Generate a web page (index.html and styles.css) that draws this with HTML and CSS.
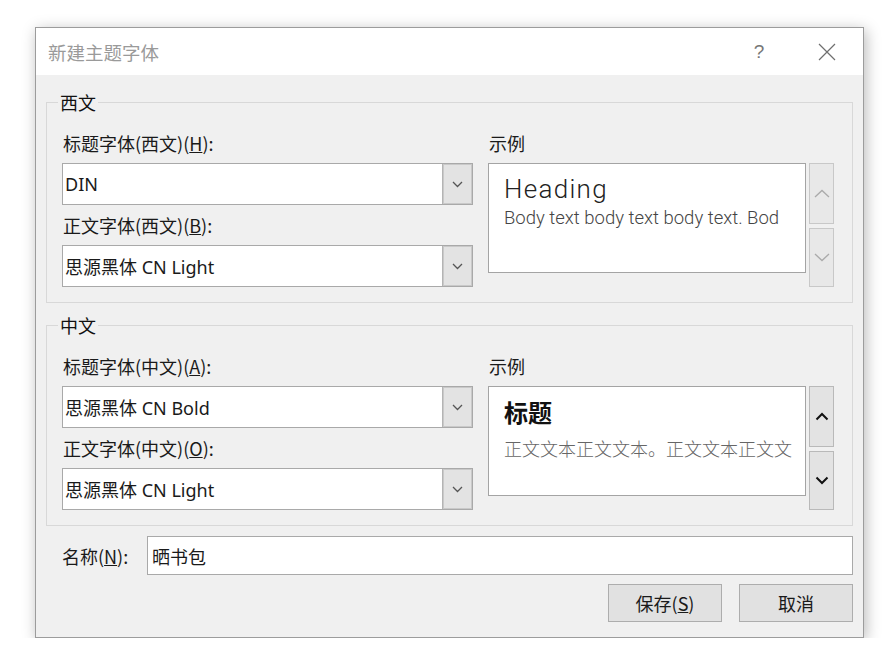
FILE: index.html
```html
<!DOCTYPE html>
<html lang="zh-CN">
<head>
<meta charset="utf-8">
<title>新建主题字体</title>
<link rel="stylesheet" href="styles.css">
</head>
<body>
<div class="dialog">
  <div class="titlebar">
    <div class="title">新建主题字体</div>
    <div class="tb-btn help">?</div>
    <div class="tb-btn close">
      <svg width="18" height="18" viewBox="0 0 18 18"><path d="M1 1 L17 17 M17 1 L1 17" stroke="#6f6f6f" stroke-width="1.2" fill="none"/></svg>
    </div>
  </div>
  <div class="content">
    <fieldset class="group">
      <legend>西文</legend>
      <div class="group-body">
        <div class="col-left">
          <div class="label">标题字体(西文)(<u>H</u>):</div>
          <div class="combo">
            <span class="value">DIN</span>
            <span class="drop"><svg width="11" height="7" viewBox="0 0 11 7"><path d="M1 1 L5.5 5.5 L10 1" stroke="#555" stroke-width="1.3" fill="none"/></svg></span>
          </div>
          <div class="label">正文字体(西文)(<u>B</u>):</div>
          <div class="combo">
            <span class="value">思源黑体 CN Light</span>
            <span class="drop"><svg width="11" height="7" viewBox="0 0 11 7"><path d="M1 1 L5.5 5.5 L10 1" stroke="#555" stroke-width="1.3" fill="none"/></svg></span>
          </div>
        </div>
        <div class="col-right">
          <div class="label">示例</div>
          <div class="preview-row">
            <div class="preview">
              <div class="pv-head latin">Heading</div>
              <div class="pv-body latin">Body text body text body text. Bod</div>
            </div>
            <div class="spin disabled">
              <div class="spin-btn up"><svg width="16" height="9" viewBox="0 0 16 9"><path d="M1 8 L8 1.5 L15 8" stroke="#aaa" stroke-width="1.3" fill="none"/></svg></div>
              <div class="spin-btn down"><svg width="16" height="9" viewBox="0 0 16 9"><path d="M1 1 L8 7.5 L15 1" stroke="#aaa" stroke-width="1.3" fill="none"/></svg></div>
            </div>
          </div>
        </div>
      </div>
    </fieldset>

    <fieldset class="group group-cn">
      <legend>中文</legend>
      <div class="group-body">
        <div class="col-left">
          <div class="label">标题字体(中文)(<u>A</u>):</div>
          <div class="combo">
            <span class="value">思源黑体 CN Bold</span>
            <span class="drop"><svg width="11" height="7" viewBox="0 0 11 7"><path d="M1 1 L5.5 5.5 L10 1" stroke="#555" stroke-width="1.3" fill="none"/></svg></span>
          </div>
          <div class="label">正文字体(中文)(<u>O</u>):</div>
          <div class="combo">
            <span class="value">思源黑体 CN Light</span>
            <span class="drop"><svg width="11" height="7" viewBox="0 0 11 7"><path d="M1 1 L5.5 5.5 L10 1" stroke="#555" stroke-width="1.3" fill="none"/></svg></span>
          </div>
        </div>
        <div class="col-right">
          <div class="label">示例</div>
          <div class="preview-row">
            <div class="preview">
              <div class="pv-head cn">标题</div>
              <div class="pv-body cn">正文文本正文文本。正文文本正文文</div>
            </div>
            <div class="spin">
              <div class="spin-btn up"><svg width="14" height="9" viewBox="0 0 14 9"><path d="M1.5 7.5 L7 2 L12.5 7.5" stroke="#111" stroke-width="2" fill="none"/></svg></div>
              <div class="spin-btn down"><svg width="14" height="9" viewBox="0 0 14 9"><path d="M1.5 1.5 L7 7 L12.5 1.5" stroke="#111" stroke-width="2" fill="none"/></svg></div>
            </div>
          </div>
        </div>
      </div>
    </fieldset>

    <div class="name-row">
      <div class="name-label">名称(<u>N</u>):</div>
      <div class="name-input">晒书包</div>
    </div>
    <div class="actions">
      <button class="btn">保存(<u>S</u>)</button>
      <button class="btn">取消</button>
    </div>
  </div>
</div>
</body>
</html>
```

FILE: styles.css
```css
html, body {
  margin: 0;
  padding: 0;
  background: #ffffff;
}

body {
  padding: 27px 0 0 35px;
  font-family: "Noto Sans", "Noto Sans CJK SC", sans-serif;
  font-size: 18px;
  color: #1a1a1a;
}

.dialog {
  width: 827px;
  border: 1px solid #9c9c9c;
  background: #f0f0f0;
  box-shadow: 2px 3px 14px rgba(0, 0, 0, 0.28);
}

.titlebar {
  height: 47px;
  background: #ffffff;
  display: flex;
  align-items: center;
}

.title {
  flex: 1;
  padding-left: 12px;
  color: #9a9a9a;
  font-size: 18.5px;
  font-family: "Noto Sans CJK SC", sans-serif;
}

.tb-btn {
  height: 47px;
  display: flex;
  align-items: center;
  justify-content: center;
  color: #777;
}

.help {
  width: 64px;
  font-size: 19px;
  font-family: "Liberation Sans", sans-serif;
}

.close {
  width: 72px;
}

.content {
  padding: 17px 10px 15px 10px;
}

.group {
  margin: 0;
  padding: 18px 17px 15px 15px;
  border: 1px solid #d8d8d8;
  min-width: 0;
}

.group-cn {
  margin-top: 12px;
}

.group legend {
  padding: 0 2px;
  margin-left: -4px;
  line-height: 20px;
  font-family: "Noto Sans CJK SC", sans-serif;
  color: #111;
}

.group-body {
  display: flex;
}

.col-left {
  width: 411px;
  display: flex;
  flex-direction: column;
  gap: 7px;
}

.col-right {
  margin-left: 15px;
  display: flex;
  flex-direction: column;
  gap: 7px;
}

.label {
  line-height: 26px;
  height: 26px;
  padding-left: 1px;
  white-space: nowrap;
  font-family: "Noto Sans CJK SC", sans-serif;
}

.combo {
  height: 42px;
  box-sizing: border-box;
  border: 1px solid #a9a9a9;
  background: #fff;
  display: flex;
}

.combo .value {
  flex: 1;
  padding-left: 2px;
  display: flex;
  align-items: center;
  white-space: nowrap;
}

.combo .drop {
  width: 29px;
  background: #e3e3e3;
  border-left: 1px solid #b4b4b4;
  box-shadow: inset 0 0 0 1px #c9c9c9;
  display: flex;
  align-items: center;
  justify-content: center;
}

.preview-row {
  display: flex;
  gap: 3px;
  align-items: flex-start;
}

.preview {
  width: 318px;
  height: 110px;
  box-sizing: border-box;
  border: 1px solid #a4a4a4;
  background: #fff;
  padding: 10px 6px 0 15px;
  overflow: hidden;
}

.pv-head {
  line-height: 30px;
  white-space: nowrap;
}

.pv-head.latin {
  font-family: Roboto, sans-serif;
  font-weight: 300;
  font-size: 26px;
  letter-spacing: 1.3px;
  color: #222;
}

.pv-head.cn {
  font-family: "Noto Sans CJK SC", sans-serif;
  font-weight: 700;
  font-size: 24px;
  color: #111;
}

.pv-body {
  line-height: 22px;
  white-space: nowrap;
  color: #555;
}

.pv-body.latin {
  margin-top: 3px;
  font-family: Roboto, sans-serif;
  font-weight: 300;
  font-size: 18.5px;
  color: #444;
}

.pv-body.cn {
  margin-top: 10px;
  font-family: "Noto Sans CJK SC", sans-serif;
  font-weight: 300;
  font-size: 18px;
  color: #666;
}

.spin {
  width: 25px;
  display: flex;
  flex-direction: column;
  gap: 4px;
}

.spin-btn {
  box-sizing: border-box;
  background: #e3e3e3;
  border: 1px solid #b9b9b9;
  display: flex;
  align-items: center;
  justify-content: center;
}

.spin.disabled .spin-btn {
  border-color: #c8c8c8;
  background: #e8e8e8;
}

.spin-btn.up {
  height: 61px;
}

.spin-btn.down {
  height: 59px;
}

.name-row {
  margin-top: 10px;
  display: flex;
  align-items: center;
}

.name-label {
  width: 101px;
  box-sizing: border-box;
  padding-left: 16px;
  font-family: "Noto Sans CJK SC", sans-serif;
  white-space: nowrap;
}

.name-input {
  flex: 1;
  height: 39px;
  box-sizing: border-box;
  border: 1px solid #a9a9a9;
  background: #fff;
  padding-left: 4px;
  display: flex;
  align-items: center;
  font-family: "Noto Sans CJK SC", sans-serif;
}

.actions {
  margin-top: 9px;
  display: flex;
  justify-content: flex-end;
  gap: 17px;
}

.btn {
  width: 114px;
  height: 38px;
  background: #e1e1e1;
  border: 1px solid #adadad;
  font-family: "Noto Sans CJK SC", sans-serif;
  font-size: 18px;
  color: #1a1a1a;
  padding: 0;
}
```
